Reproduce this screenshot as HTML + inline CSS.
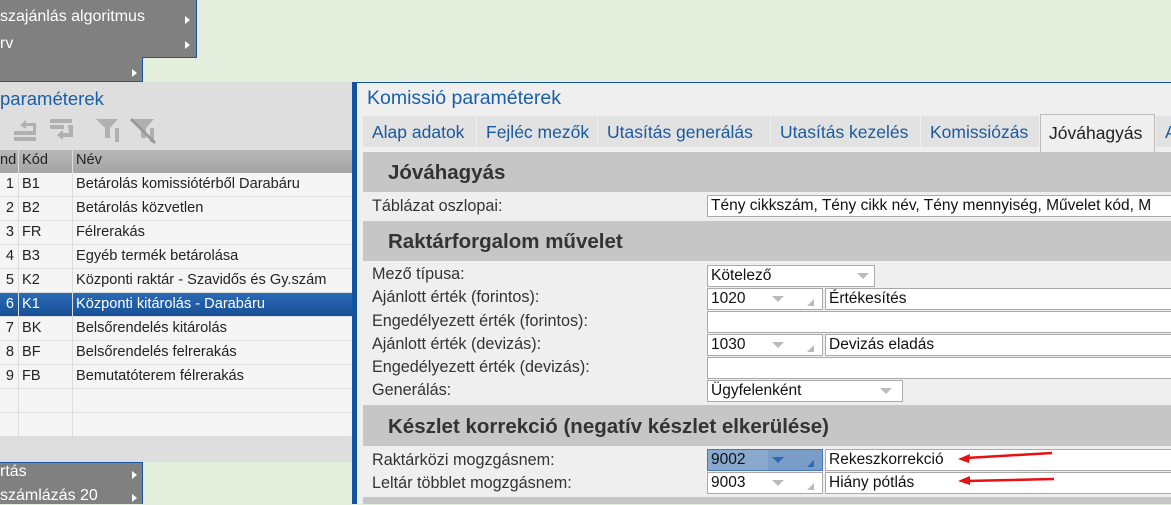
<!DOCTYPE html>
<html><head><meta charset="utf-8"><style>
*{margin:0;padding:0;box-sizing:border-box}
body{width:1171px;height:504px;overflow:hidden;background:#e3eedd;font-family:"Liberation Sans",Arial,sans-serif;position:relative;color:#222}
.a{position:absolute}
.menu{background:#808080;color:#fff;font-size:16px}
.arr{position:absolute;width:0;height:0;border-left:5px solid #fff;border-top:4px solid transparent;border-bottom:4px solid transparent}
.row{position:absolute;left:0;width:352px;height:24px;background:#f5f5f5;border-bottom:1px solid #ddd;font-size:14.6px}
.row span{position:absolute;top:3px;white-space:nowrap}
.c1{left:0;width:18px;text-align:right;padding-right:4px}
.c2{left:22px}.c3{left:76px}
.vl{position:absolute;top:150px;height:287px;width:1px;background:#ddd}
.sec{position:absolute;left:363px;width:808px;background:#c6c6c6;font-weight:bold;font-size:20.5px;color:#333;padding-left:25px;white-space:nowrap}
.lbl{position:absolute;left:372px;font-size:16.2px;color:#333;white-space:nowrap}
.inp{position:absolute;background:#fff;border:1px solid #aaa;font-size:15.5px;padding-left:3px;line-height:20px;height:22px;color:#111;white-space:nowrap;overflow:hidden}
.dd{position:absolute;width:0;height:0;border-top:6px solid #bbb;border-left:6px solid transparent;border-right:6px solid transparent}
.tri{position:absolute;width:0;height:0;border-bottom:7px solid #bbb;border-left:7px solid transparent}
.tab{position:absolute;top:116px;height:31px;background:#e2e2e2;color:#1a5aa0;font-size:17.5px;padding:6px 9px 0;white-space:nowrap;overflow:hidden}
</style></head><body>
<div class="a menu" style="left:0;top:0;width:197px;height:58px;border:1px solid #1b56a0;border-top:none;border-left:none"></div>
<div class="a" style="left:0;top:8px;font-size:16px;color:#fff">szajánlás algoritmus</div>
<div class="arr" style="left:185px;top:16px"></div>
<div class="a" style="left:0;top:35px;font-size:16px;color:#fff">rv</div>
<div class="arr" style="left:185px;top:41px"></div>
<div class="a menu" style="left:0;top:57px;width:143px;height:25px;border-right:1px solid #1b56a0"></div>
<div class="arr" style="left:132px;top:69px"></div>
<div class="a" style="left:0;top:81px;width:143px;height:1px;background:#1b56a0"></div>

<div class="a" style="left:0;top:82px;width:352px;height:380px;background:#dedede"></div>
<div class="a" style="left:0;top:88px;font-size:18.5px;color:#1a5fa8">paraméterek</div>
<svg class="a" style="left:0;top:116px" width="160" height="30" viewBox="0 0 160 30">
<g fill="#b0b0b0">
<rect x="14" y="15" width="22" height="4"/><rect x="14" y="21" width="22" height="4"/>
<path d="M20 9 l6 -5 v3 h10 v10 h-3 v-7 h-7 v3z"/>
<rect x="50" y="3" width="22" height="4"/><rect x="50" y="9" width="14" height="4"/>
<path d="M68 9 h5 v12 h-10 v3 l-6 -5 l6 -5 v3 h6z"/>
<path d="M96 3 h22 l-8 9 v10 h-5 v-10z"/>
<rect x="115" y="12" width="4" height="14"/>
<path d="M132 3 h22 l-8 9 v10 h-5 v-10z"/>
<rect x="150" y="12" width="4" height="14"/>
<path d="M132 2 l24 24 l-2 2 l-24 -24z" fill="#999"/>
</g></svg>
<div class="a" style="left:0;top:150px;width:352px;height:23px;background:linear-gradient(#b8b8b8,#a4a4a4);font-size:14.6px">
<span class="a" style="left:0;top:2px">nd</span><span class="a" style="left:22px;top:2px">Kód</span><span class="a" style="left:76px;top:2px">Név</span></div>
<div class="row" style="top:173px"><span class="c1">1</span><span class="c2">B1</span><span class="c3">Betárolás komissiótérből Darabáru</span></div>
<div class="row" style="top:197px"><span class="c1">2</span><span class="c2">B2</span><span class="c3">Betárolás közvetlen</span></div>
<div class="row" style="top:221px"><span class="c1">3</span><span class="c2">FR</span><span class="c3">Félrerakás</span></div>
<div class="row" style="top:245px"><span class="c1">4</span><span class="c2">B3</span><span class="c3">Egyéb termék betárolása</span></div>
<div class="row" style="top:269px;overflow:hidden"><span class="c1">5</span><span class="c2">K2</span><span class="c3">Központi raktár - Szavidős és Gy.szám</span></div>
<div class="row" style="top:293px;background:linear-gradient(#2a6bb5,#174f96);color:#fff"><span class="c1">6</span><span class="c2">K1</span><span class="c3">Központi kitárolás - Darabáru</span></div>
<div class="row" style="top:317px"><span class="c1">7</span><span class="c2">BK</span><span class="c3">Belsőrendelés kitárolás</span></div>
<div class="row" style="top:341px"><span class="c1">8</span><span class="c2">BF</span><span class="c3">Belsőrendelés felrerakás</span></div>
<div class="row" style="top:365px"><span class="c1">9</span><span class="c2">FB</span><span class="c3">Bemutatóterem félrerakás</span></div>
<div class="row" style="top:389px"></div>
<div class="row" style="top:413px"></div>
<div class="vl" style="left:18px"></div><div class="vl" style="left:72px"></div>

<div class="a" style="left:0;top:462px;width:143px;height:1px;background:#1b56a0"></div>
<div class="a menu" style="left:0;top:463px;width:143px;height:41px;border-right:1px solid #1b56a0"></div>
<div class="a" style="left:0;top:463px;font-size:16px;color:#fff">rtás</div>
<div class="arr" style="left:132px;top:471px"></div>
<div class="a" style="left:0;top:487px;font-size:16px;color:#fff">számlázás 20</div>
<div class="arr" style="left:132px;top:494px"></div>

<div class="a" style="left:352px;top:82px;width:5px;height:422px;background:#1452a0"></div>

<div class="a" style="left:357px;top:82px;width:814px;height:422px;background:#efefef;border-top:1px solid #1452a0"></div>
<div class="a" style="left:367px;top:87px;font-size:19.5px;color:#1a5fa8">Komissió paraméterek</div>
<div class="tab" style="left:363px;width:113px">Alap adatok</div>
<div class="tab" style="left:477px;width:120px">Fejléc mezők</div>
<div class="tab" style="left:598px;width:172px">Utasítás generálás</div>
<div class="tab" style="left:771px;width:149px">Utasítás kezelés</div>
<div class="tab" style="left:921px;width:118px">Komissiózás</div>
<div class="tab" style="left:1040px;top:114px;height:39px;width:115px;padding-top:8px;padding-left:8px;background:#efefef;border:1px solid #bbb;border-bottom:none;color:#222">Jóváhagyás</div>
<div class="tab" style="left:1156px;width:20px">A</div>

<div class="sec" style="top:152px;height:40px;line-height:42px">Jóváhagyás</div>
<div class="lbl" style="top:197px">Táblázat oszlopai:</div>
<div class="inp" style="left:707px;top:195px;width:470px">Tény cikkszám, Tény cikk név, Tény mennyiség, Művelet kód, M</div>
<div class="sec" style="top:221px;height:40px;line-height:42px">Raktárforgalom művelet</div>

<div class="lbl" style="top:265px">Mező típusa:</div>
<div class="inp" style="left:707px;top:265px;width:168px">Kötelező</div><div class="dd" style="left:857px;top:273px"></div>
<div class="lbl" style="top:288px">Ajánlott érték (forintos):</div>
<div class="inp" style="left:707px;top:288px;width:116px">1020</div><div class="dd" style="left:772px;top:296px"></div><div class="tri" style="left:807px;top:299px"></div>
<div class="inp" style="left:825px;top:288px;width:350px">Értékesítés</div>
<div class="lbl" style="top:312px">Engedélyezett érték (forintos):</div>
<div class="inp" style="left:707px;top:311px;width:470px"></div>
<div class="lbl" style="top:335px">Ajánlott érték (devizás):</div>
<div class="inp" style="left:707px;top:334px;width:116px">1030</div><div class="dd" style="left:772px;top:342px"></div><div class="tri" style="left:807px;top:345px"></div>
<div class="inp" style="left:825px;top:334px;width:350px">Devizás eladás</div>
<div class="lbl" style="top:358px">Engedélyezett érték (devizás):</div>
<div class="inp" style="left:707px;top:357px;width:470px"></div>
<div class="lbl" style="top:381px">Generálás:</div>
<div class="inp" style="left:707px;top:380px;width:196px">Ügyfelenként</div><div class="dd" style="left:880px;top:388px"></div>

<div class="sec" style="top:405px;height:41px;line-height:44px">Készlet korrekció (negatív készlet elkerülése)</div>
<div class="lbl" style="top:451px">Raktárközi mogzgásnem:</div>
<div class="inp" style="left:707px;top:449px;width:116px;background:#8aa9cf;border-color:#4a78b5">9002</div>
<div class="a" style="left:768px;top:450px;width:54px;height:20px;background:#7a9dc8"></div>
<div class="dd" style="left:772px;top:457px;border-top-color:#2a6bb5"></div><div class="tri" style="left:807px;top:460px;border-bottom-color:#2a6bb5"></div>
<div class="inp" style="left:825px;top:449px;width:350px">Rekeszkorrekció</div>
<div class="lbl" style="top:474px">Leltár többlet mogzgásnem:</div>
<div class="inp" style="left:707px;top:472px;width:116px">9003</div><div class="dd" style="left:772px;top:480px"></div><div class="tri" style="left:807px;top:483px"></div>
<div class="inp" style="left:825px;top:472px;width:350px">Hiány pótlás</div>
<div class="a" style="left:363px;top:497px;width:808px;height:7px;background:#c6c6c6"></div>

<svg class="a" style="left:950px;top:448px" width="110" height="40" viewBox="0 0 110 40">
<path d="M16 10 L102 5" stroke="#e81010" stroke-width="2.5"/>
<path d="M8 11 L20 6 L19 15z" fill="#e81010"/>
<path d="M16 33 L104 31" stroke="#e81010" stroke-width="2.5"/>
<path d="M8 33 L20 28 L20 37z" fill="#e81010"/>
</svg>
</body></html>
